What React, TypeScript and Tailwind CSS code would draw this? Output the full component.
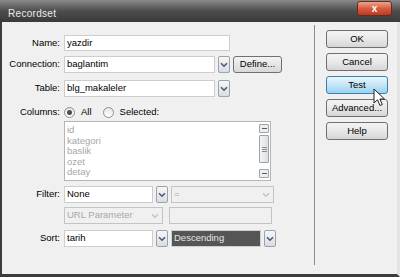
import React from 'react';

const Chevron = ({ color = '#4a5a78' }: { color?: string }) => (
  <svg width="8" height="6" viewBox="0 0 8 6">
    <path d="M1 1.2 L4 4.2 L7 1.2" fill="none" stroke={color} strokeWidth="1.6" />
  </svg>
);

const ArrowBox = ({ w = 'w-[12px]' }: { w?: string }) => (
  <div className={`${w} h-full ml-[3px] flex items-center justify-center rounded-[2px] border border-[#9aa3ad] bg-gradient-to-b from-[#f7f7f7] to-[#d9dde2]`}>
    <Chevron />
  </div>
);

// enabled select: white field + detached arrow box
const Select = ({ value, field, dark }: { value: string; field: string; dark?: boolean }) => (
  <div className="flex h-[17px]">
    <div
      className={`${field} h-full flex items-center px-[2px] border ${
        dark ? 'bg-[#555555] text-[#e6e6e6] border-[#cfcfcf]' : 'bg-white border-[#cdcdcd]'
      }`}
    >
      {value}
    </div>
    <ArrowBox />
  </div>
);

// disabled select: arrow drawn inside the box
const DisabledSelect = ({ value, w }: { value: string; w: string }) => (
  <div className={`${w} h-[17px] flex items-center justify-between pl-[2px] pr-[3px] border border-[#c4c4c4] bg-[#f0f0f0] text-[#a8a8a8]`}>
    <span>{value}</span>
    <Chevron color="#c2c6cc" />
  </div>
);

const Label = ({ children }: { children: React.ReactNode }) => (
  <div className="w-[58px] shrink-0 text-right mr-[4px]">{children}</div>
);

const Radio = ({ on }: { on?: boolean }) => (
  <div className="w-[11px] h-[11px] rounded-full border border-[#8a8f96] bg-gradient-to-b from-[#e6e6e6] to-white flex items-center justify-center">
    {on && <div className="w-[5px] h-[5px] rounded-full bg-[#4c4c4c]" />}
  </div>
);

const Button = ({ label, hot }: { label: string; hot?: boolean }) => (
  <div
    className={`w-[62px] h-[18px] flex items-center justify-center rounded-[3px] border ${
      hot
        ? 'border-[#3c7fb1] bg-gradient-to-b from-[#e8f6fd] via-[#c4e5f6] to-[#98d1ef]'
        : 'border-[#707070] bg-gradient-to-b from-[#f4f4f4] via-[#e8e8e8] to-[#d6d6d6]'
    }`}
  >
    {label}
  </div>
);

const columns = ['id', 'kategori', 'baslik', 'ozet', 'detay'];

export default function App() {
  return (
    <div
      className="w-[400px] h-[277px] flex flex-col bg-[#f0f0f0] text-[9.5px] text-black overflow-hidden"
      style={{ fontFamily: '"Liberation Sans", Arial, sans-serif' }}
    >
      {/* title bar */}
      <div className="h-[22px] shrink-0 flex items-start justify-between pl-[8px] pr-[8px] bg-gradient-to-b from-[#8a8a8a] via-[#4d4d4d] to-[#3a3a3a]">
        <span className="mt-[6px] text-[10px] text-[#ececec] tracking-[0.3px]">Recordset</span>
        <div className="mt-[1px] w-[35px] h-[15px] flex items-center justify-center rounded-[3px] border border-[#6a2a20] bg-gradient-to-b from-[#eaa48e] via-[#d65c3e] to-[#bb3a20]">
          <span className="text-[10px] font-bold text-white leading-none">x</span>
        </div>
      </div>

      {/* body */}
      <div className="flex-1 flex border-l-2 border-l-[#3c3c3c] border-r-[3px] border-r-[#e4e4e4] border-b-[3px] border-b-[#3c3c3c]">
        {/* form */}
        <div className="w-[312px] shrink-0 flex flex-col">
          <div className="flex items-center mt-[13px] h-[16px]">
            <Label>Name:</Label>
            <div className="w-[166px] h-full flex items-center px-[2px] bg-white border border-[#cdcdcd]">yazdir</div>
          </div>

          <div className="flex items-center mt-[5px]">
            <Label>Connection:</Label>
            <Select value="baglantim" field="w-[151px]" />
            <div className="ml-[3px] w-[49px] h-[17px] flex items-center justify-center rounded-[3px] border border-[#707070] bg-gradient-to-b from-[#f4f4f4] to-[#d8d8d8]">
              Define...
            </div>
          </div>

          <div className="flex items-center mt-[7px]">
            <Label>Table:</Label>
            <Select value="blg_makaleler" field="w-[151px]" />
          </div>

          <div className="flex items-center mt-[8px] h-[14px]">
            <Label>Columns:</Label>
            <div className="flex items-center gap-[6px]">
              <Radio on />
              <span>All</span>
            </div>
            <div className="flex items-center gap-[6px] ml-[11px]">
              <Radio />
              <span>Selected:</span>
            </div>
          </div>

          <div className="flex mt-[2px]">
            <Label>{''}</Label>
            <div className="w-[207px] h-[60px] flex bg-white border border-[#b5b5b5]">
              <div className="flex-1 pl-[2px] pt-[3px] text-[#a6a6a6] leading-[10.6px]">
                {columns.map(c => (
                  <div key={c}>{c}</div>
                ))}
              </div>
              <div className="w-[11px] flex flex-col py-[2px] pr-[1px]">
                <div className="h-[9px] border border-[#9da3aa] rounded-[1px] bg-[#eceef0] flex items-center justify-center">
                  <div className="w-[5px] h-[1px] bg-[#5a5a5a]" />
                </div>
                <div className="h-[28px] mt-[2px] border border-[#9da3aa] rounded-[1px] bg-gradient-to-r from-[#f4f4f4] to-[#dcdfe3] flex flex-col items-center justify-center gap-[1px]">
                  <div className="w-[5px] h-[1px] bg-[#8c8c8c]" />
                  <div className="w-[5px] h-[1px] bg-[#8c8c8c]" />
                  <div className="w-[5px] h-[1px] bg-[#8c8c8c]" />
                </div>
                <div className="flex-1" />
                <div className="h-[9px] border border-[#9da3aa] rounded-[1px] bg-[#eceef0] flex items-center justify-center">
                  <div className="w-[5px] h-[1px] bg-[#5a5a5a]" />
                </div>
              </div>
            </div>
          </div>

          <div className="flex items-center mt-[5px]">
            <Label>Filter:</Label>
            <Select value="None" field="w-[89px]" />
            <div className="ml-[3px]">
              <DisabledSelect value="=" w="w-[103px]" />
            </div>
          </div>

          <div className="flex items-center mt-[4px]">
            <Label>{''}</Label>
            <DisabledSelect value="URL Parameter" w="w-[99px]" />
            <div className="ml-[6px] w-[103px] h-[17px] border border-[#c4c4c4] bg-[#f0f0f0]" />
          </div>

          <div className="flex items-center mt-[6px]">
            <Label>Sort:</Label>
            <Select value="tarih" field="w-[89px]" />
            <div className="ml-[3px]">
              <Select value="Descending" field="w-[90px]" dark />
            </div>
          </div>
        </div>

        {/* separator */}
        <div className="w-[1px] bg-[#8c8c8c] mt-[3px] mb-[9px]" />

        {/* buttons */}
        <div className="relative flex flex-col gap-[5px] pl-[11px] pt-[8px]">
          <Button label="OK" />
          <Button label="Cancel" />
          <Button label="Test" hot />
          <Button label="Advanced..." />
          <Button label="Help" />
          <svg className="absolute left-[58px] top-[66px]" width="13" height="19" viewBox="0 0 13 19">
            <path
              d="M1 1 L1 15 L4.5 11.8 L7 17.5 L9.3 16.5 L6.9 11 L11.5 11 Z"
              fill="white"
              stroke="#222"
              strokeWidth="1"
              strokeLinejoin="round"
            />
          </svg>
        </div>
      </div>
    </div>
  );
}
